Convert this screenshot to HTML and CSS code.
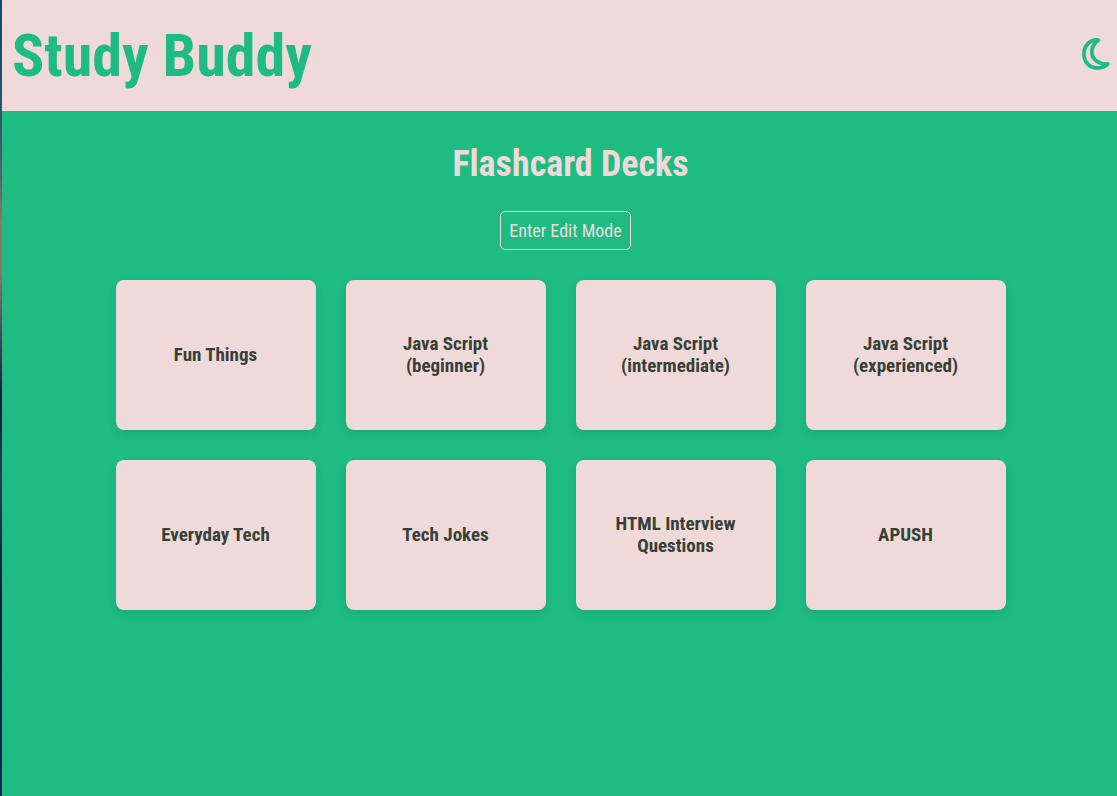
FILE: index.html
```html
<!DOCTYPE html>
<html lang="en">
<head>
<meta charset="utf-8">
<meta name="viewport" content="width=device-width, initial-scale=1">
<title>Study Buddy</title>
<link rel="stylesheet" href="styles.css">
</head>
<body>
<div class="edge"></div>
<div class="app">
  <header class="header">
    <h1 class="brand">Study Buddy</h1>
    <button class="theme" type="button" aria-label="Dark mode">
      <svg class="moon" viewBox="0 0 28 36" aria-hidden="true"><path d="M16.300 2.100C8.500 1 1.900 7.500 1.900 16C1.900 24.500 8 30 15 30C19.500 30 23.500 28.500 25.700 26C17 26.500 9.800 21.500 9.800 14C9.800 9 12.500 4.800 16.300 2.100Z"/></svg>
    </button>
  </header>
  <main class="main">
    <h2 class="title">Flashcard Decks</h2>
    <button class="edit" type="button">Enter Edit Mode</button>
    <div class="decks">
      <button class="deck" type="button">Fun Things</button>
      <button class="deck" type="button">Java Script (beginner)</button>
      <button class="deck" type="button">Java Script (intermediate)</button>
      <button class="deck" type="button">Java Script (experienced)</button>
      <button class="deck" type="button">Everyday Tech</button>
      <button class="deck" type="button">Tech Jokes</button>
      <button class="deck" type="button">HTML Interview Questions</button>
      <button class="deck" type="button">APUSH</button>
    </div>
  </main>
</div>
</body>
</html>
```
FILE: styles.css
```css
* {
  box-sizing: border-box;
}

body {
  display: flex;
  min-height: 100vh;
  margin: 0;
  background: #1ebc82;
  font-family: "Roboto Condensed", Roboto, sans-serif;
}

button {
  font-family: inherit;
  cursor: pointer;
}

.edge {
  flex: none;
  width: 2px;
  background: linear-gradient(#17486b 0%, #24506e 12%, #55606c 22%, #8a7965 28%, #8b7569 34%, #46485c 42%, #141c3c 50%, #2b3a58 60%, #101c3a 75%, #122a52 100%);
}

.app {
  flex: 1;
}

.header {
  display: flex;
  align-items: center;
  justify-content: space-between;
  padding: 21px 7px 20px 10px;
  background: #efdad9;
}

.brand {
  margin: 0;
  color: #1ebc82;
  font-size: 60px;
  font-weight: 700;
  line-height: 70px;
}

.theme {
  display: flex;
  padding: 0;
  border: 0;
  background: none;
}

.moon {
  width: 28px;
  height: 36px;
  fill: none;
  stroke: #1ebc82;
  stroke-width: 3.8;
  stroke-linejoin: round;
}

.main {
  display: flex;
  flex-direction: column;
  align-items: center;
  padding: 31px 0 30px 2px;
}

.title {
  margin: 0 0 25px 20px;
  color: #efdad9;
  font-size: 36px;
  font-weight: 700;
  line-height: 44px;
}

.edit {
  margin: 0 0 30px 10px;
  padding: 8px;
  border: 1px solid #efdad9;
  border-radius: 5px;
  background: none;
  color: #efdad9;
  font-size: 18px;
  line-height: 21px;
}

.decks {
  display: flex;
  flex-wrap: wrap;
  justify-content: center;
  gap: 30px;
  max-width: 920px;
}

.deck {
  width: 200px;
  height: 150px;
  padding: 20px 30px;
  border: 0;
  border-radius: 8px;
  background: #efdad9;
  box-shadow: 0 4px 8px rgba(0, 0, 0, 0.1);
  color: #364038;
  font-size: 19px;
  font-weight: 700;
  line-height: 22px;
}
```
